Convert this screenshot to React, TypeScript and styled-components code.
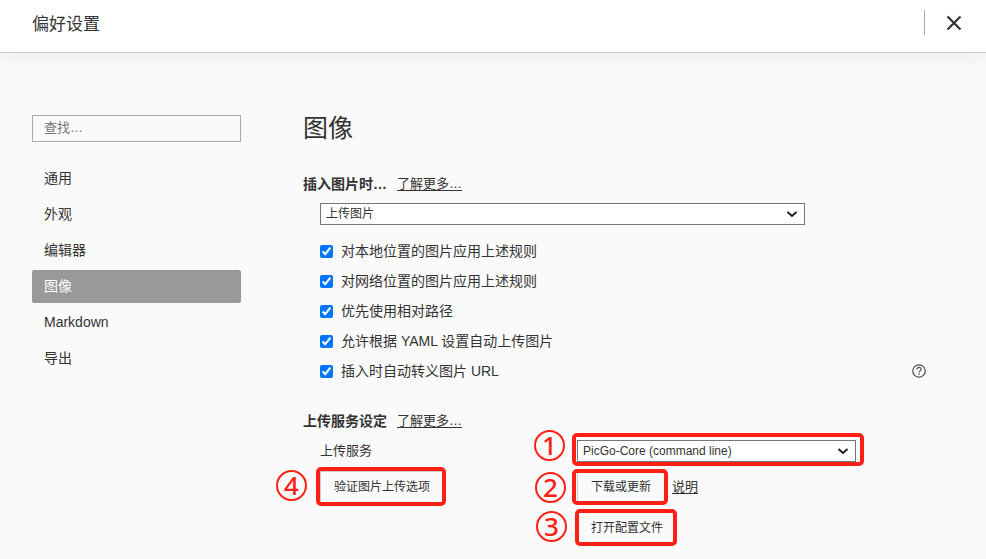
import React from "react";
import styled, { createGlobalStyle } from "styled-components";

const RED = "#ff2015";

const GlobalStyle = createGlobalStyle`
  *, *::before, *::after { box-sizing: border-box; }
  body {
    margin: 0;
    background: #fafafa;
    color: #333;
    font-family: "Liberation Sans", "Noto Sans CJK SC", sans-serif;
    font-size: 14px;
    line-height: 20px;
  }
  button, input, select { font: inherit; color: inherit; }
`;

const Header = styled.header`
  display: flex;
  align-items: center;
  justify-content: space-between;
  height: 53px;
  padding: 0 22px 7px 32px;
  background: #fff;
  border-bottom: 1px solid #ccc;
  box-shadow: 0 6px 20px rgba(0, 0, 0, 0.05);
`;

const Title = styled.h1`
  margin: 4px 0 0;
  font-size: 17px;
  font-weight: 400;
  line-height: 24px;
`;

const CloseArea = styled.div`
  display: flex;
  align-items: center;
  height: 25px;
  padding-left: 19px;
  border-left: 1px solid #aaa;
`;

const CloseButton = styled.button`
  display: flex;
  padding: 0;
  border: 0;
  background: none;
`;

const Layout = styled.div`
  display: grid;
  grid-template-columns: 209px minmax(0, 1fr);
  column-gap: 62px;
  padding: 62px 60px 14px 32px;
`;

const SearchInput = styled.input`
  display: block;
  width: 100%;
  height: 27px;
  padding: 0 11px 2px;
  border: 1px solid #aaa;
  border-radius: 0;
  background: #fafafa;
  font-size: 13px;
  &::placeholder { color: #777; opacity: 1; }
`;

const Nav = styled.nav`
  display: flex;
  flex-direction: column;
  gap: 3px;
  margin-top: 20px;
`;

const NavItem = styled.a<{ $active?: boolean }>`
  display: flex;
  align-items: center;
  height: 33px;
  padding: 0 12px 1px;
  border-radius: 2px;
  color: ${(p) => (p.$active ? "#fff" : "#333")};
  background: ${(p) => (p.$active ? "#999" : "transparent")};
  text-decoration: none;
`;

const PageTitle = styled.h2`
  margin: 0 0 32px;
  font-size: 25px;
  font-weight: 400;
  line-height: 27px;
`;

const SectionHead = styled.div`
  display: flex;
  gap: 10px;
  align-items: center;
  height: 20px;
`;

const SectionTitle = styled.h3`
  margin: 0;
  font-size: 14px;
  font-weight: 700;
`;

const Link = styled.a`
  color: #333;
  font-size: 13px;
  text-decoration: underline;
  text-underline-offset: 2px;
`;

const SectionBody = styled.div`
  padding: 9px 0 0 17px;
`;

const SelectBox = styled.div<{ $max: number }>`
  position: relative;
  width: 100%;
  max-width: ${(p) => p.$max}px;
`;

const Select = styled.select`
  appearance: none;
  display: block;
  width: 100%;
  height: 22px;
  padding: 0 28px 1px 5px;
  border: 1px solid #767676;
  border-radius: 0;
  background: #fff;
  font-size: 12px;
  line-height: 18px;
`;

const Chevron = styled.svg`
  position: absolute;
  top: 7px;
  right: 7px;
  pointer-events: none;
`;

const Options = styled.div`
  display: flex;
  flex-direction: column;
  gap: 10px;
  margin: 16px 0 30px;
`;

const OptionRow = styled.div`
  display: flex;
  align-items: center;
  justify-content: space-between;
  height: 20px;
`;

const OptionLabel = styled.label`
  display: flex;
  align-items: center;
  gap: 8px;
`;

const Checkbox = styled.input`
  width: 13px;
  height: 13px;
  margin: 0;
  accent-color: #0075ff;
`;

const HelpButton = styled.button`
  display: flex;
  padding: 0;
  border: 0;
  background: none;
`;

const ServiceGrid = styled.div`
  display: grid;
  grid-template-columns: 257px minmax(0, 1fr);
  row-gap: 9px;
  align-items: center;
`;

const FieldLabel = styled.label`
  font-size: 13px;
`;

const ButtonRow = styled.div`
  display: flex;
  align-items: center;
  gap: 7px;
`;

const LowerRow = styled(ButtonRow)`
  grid-column: 2;
`;

const Button = styled.button`
  display: block;
  height: 32px;
  padding: 0 13px;
  border: 1px solid #ccc;
  background: #fafafa;
  font-size: 12px;
  white-space: nowrap;
`;

const Marked = styled.div`
  position: relative;
`;

const Ring = styled.span<{ $inset: string }>`
  position: absolute;
  inset: ${(p) => p.$inset};
  border: 4px solid ${RED};
  border-radius: 5px;
  pointer-events: none;
`;

const Step = styled.span<{ $top: number; $left: number }>`
  position: absolute;
  top: ${(p) => p.$top}px;
  left: ${(p) => p.$left}px;
  display: flex;
  align-items: center;
  justify-content: center;
  width: 31px;
  height: 31px;
  border: 2px solid ${RED};
  border-radius: 50%;
  color: ${RED};
  font-family: "Noto Sans", "Open Sans", sans-serif;
  font-size: 26px;
  font-weight: 500;
  line-height: 27px;
`;

const navItems = ["通用", "外观", "编辑器", "图像", "Markdown", "导出"];

const options = [
  "对本地位置的图片应用上述规则",
  "对网络位置的图片应用上述规则",
  "优先使用相对路径",
  "允许根据 YAML 设置自动上传图片",
  "插入时自动转义图片 URL",
];

function Arrow() {
  return (
    <Chevron width="12" height="8" viewBox="0 0 12 8" aria-hidden="true">
      <path d="M1.5 2l4.5 4 4.5-4" fill="none" stroke="#222" strokeWidth="2" />
    </Chevron>
  );
}

function HelpIcon() {
  return (
    <svg width="14" height="14" viewBox="0 0 14 14" fill="none" stroke="#555" aria-hidden="true">
      <circle cx="7" cy="7" r="6.2" strokeWidth="1.3" />
      <path d="M4.9 5.5c0-1.3.9-2.1 2.1-2.1s2.1.8 2.1 1.9c0 1.5-2 1.6-2 3.3" strokeWidth="1.2" />
      <path d="M7.1 9.6v1.3" strokeWidth="1.3" />
    </svg>
  );
}

export default function App() {
  return (
    <>
      <GlobalStyle />
      <Header>
        <Title>偏好设置</Title>
        <CloseArea>
          <CloseButton type="button" aria-label="关闭">
            <svg width="20" height="20" viewBox="0 0 20 20" aria-hidden="true">
              <path d="M3.5 3.5l13 13M16.5 3.5l-13 13" stroke="#333" strokeWidth="2.2" />
            </svg>
          </CloseButton>
        </CloseArea>
      </Header>
      <Layout>
        <aside>
          <SearchInput type="text" placeholder="查找…" aria-label="查找" />
          <Nav>
            {navItems.map((item) => (
              <NavItem key={item} href="#" $active={item === "图像"}>
                {item}
              </NavItem>
            ))}
          </Nav>
        </aside>
        <main>
          <PageTitle>图像</PageTitle>
          <SectionHead>
            <SectionTitle id="insert-title">插入图片时…</SectionTitle>
            <Link href="#">了解更多…</Link>
          </SectionHead>
          <SectionBody>
            <SelectBox $max={485}>
              <Select aria-labelledby="insert-title">
                <option>上传图片</option>
              </Select>
              <Arrow />
            </SelectBox>
            <Options>
              {options.map((text, i) => (
                <OptionRow key={text}>
                  <OptionLabel>
                    <Checkbox type="checkbox" defaultChecked />
                    {text}
                  </OptionLabel>
                  {i === options.length - 1 && (
                    <HelpButton type="button" aria-label="帮助">
                      <HelpIcon />
                    </HelpButton>
                  )}
                </OptionRow>
              ))}
            </Options>
          </SectionBody>
          <SectionHead>
            <SectionTitle>上传服务设定</SectionTitle>
            <Link href="#">了解更多…</Link>
          </SectionHead>
          <SectionBody>
            <ServiceGrid>
              <FieldLabel htmlFor="service">上传服务</FieldLabel>
              <SelectBox $max={279}>
                <Select id="service">
                  <option>PicGo-Core (command line)</option>
                </Select>
                <Arrow />
                <Ring $inset="-7px -8px -4px -5px" />
                <Step $top={-10} $left={-43}>1</Step>
              </SelectBox>
              <ButtonRow>
                <Marked>
                  <Button type="button">验证图片上传选项</Button>
                  <Ring $inset="-4px -2px -3px -4px" />
                  <Step $top={-1} $left={-44}>4</Step>
                </Marked>
              </ButtonRow>
              <ButtonRow>
                <Marked>
                  <Button type="button">下载或更新</Button>
                  <Ring $inset="-2px -3px -2px -5px" />
                  <Step $top={1} $left={-42}>2</Step>
                </Marked>
                <Link href="#">说明</Link>
              </ButtonRow>
              <LowerRow>
                <Marked>
                  <Button type="button">打开配置文件</Button>
                  <Ring $inset="-3px 0 -2px -2px" />
                  <Step $top={-1} $left={-41}>3</Step>
                </Marked>
              </LowerRow>
            </ServiceGrid>
          </SectionBody>
        </main>
      </Layout>
    </>
  );
}
